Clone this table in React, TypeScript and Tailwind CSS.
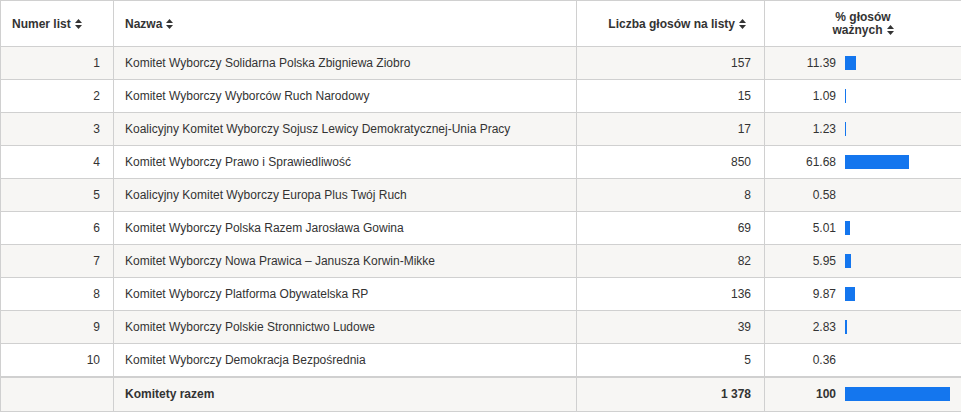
const rows = [
  { n: 1, name: "Komitet Wyborczy Solidarna Polska Zbigniewa Ziobro", votes: "157", pct: 11.39 },
  { n: 2, name: "Komitet Wyborczy Wyborców Ruch Narodowy", votes: "15", pct: 1.09 },
  { n: 3, name: "Koalicyjny Komitet Wyborczy Sojusz Lewicy Demokratycznej-Unia Pracy", votes: "17", pct: 1.23 },
  { n: 4, name: "Komitet Wyborczy Prawo i Sprawiedliwość", votes: "850", pct: 61.68 },
  { n: 5, name: "Koalicyjny Komitet Wyborczy Europa Plus Twój Ruch", votes: "8", pct: 0.58 },
  { n: 6, name: "Komitet Wyborczy Polska Razem Jarosława Gowina", votes: "69", pct: 5.01 },
  { n: 7, name: "Komitet Wyborczy Nowa Prawica – Janusza Korwin-Mikke", votes: "82", pct: 5.95 },
  { n: 8, name: "Komitet Wyborczy Platforma Obywatelska RP", votes: "136", pct: 9.87 },
  { n: 9, name: "Komitet Wyborczy Polskie Stronnictwo Ludowe", votes: "39", pct: 2.83 },
  { n: 10, name: "Komitet Wyborczy Demokracja Bezpośrednia", votes: "5", pct: 0.36 },
];

function SortIcon() {
  return (
    <svg width="7" height="10" viewBox="0 0 7 10" className="ml-[4px] inline-block align-[-1px]" aria-hidden>
      <path d="M3.5 0 L7 4 H0 Z" fill="#333" />
      <path d="M3.5 10 L7 6 H0 Z" fill="#333" />
    </svg>
  );
}

function PctCell({ pct, bold }: { pct: number; bold?: boolean }) {
  const w = Math.floor(pct * 1.05);
  return (
    <div className="flex items-center">
      <span className={"w-[71px] text-right " + (bold ? "font-bold" : "")}>{bold ? "100" : pct.toFixed(2)}</span>
      {w > 0 ? <span className="ml-[9px] h-[14px] bg-[#1476ee]" style={{ width: w }} /> : null}
    </div>
  );
}

export default function App() {
  return (
    <div className="bg-white font-['Liberation_Sans',Arial,sans-serif] text-[12px] text-[#333]">
      <table className="w-[961px] table-fixed border-collapse border border-[#d0d0d0]">
        <colgroup>
          <col className="w-[113px]" />
          <col className="w-[463px]" />
          <col className="w-[188px]" />
          <col className="w-[197px]" />
        </colgroup>
        <thead>
          <tr className="h-[46px] bg-white">
            <th className="border border-[#d0d0d0] pl-[11px] text-left font-bold">
              Numer list<SortIcon />
            </th>
            <th className="border border-[#d0d0d0] pl-[11px] text-left font-bold">
              Nazwa<SortIcon />
            </th>
            <th className="border border-[#d0d0d0] pr-[18px] text-right font-bold">
              Liczba głosów na listy<SortIcon />
            </th>
            <th className="border border-[#d0d0d0] text-center font-bold leading-[13px]">
              % głosów
              <br />
              ważnych<SortIcon />
            </th>
          </tr>
        </thead>
        <tbody>
          {rows.map((r, i) => (
            <tr key={r.n} className={"h-[33px] " + (i % 2 === 0 ? "bg-[#f7f6f4]" : "bg-white")}>
              <td className="border border-[#d0d0d0] pr-[13px] text-right">{r.n}</td>
              <td className="border border-[#d0d0d0] pl-[11px]">{r.name}</td>
              <td className="border border-[#d0d0d0] pr-[13px] text-right">{r.votes}</td>
              <td className="border border-[#d0d0d0] p-0">
                <PctCell pct={r.pct} />
              </td>
            </tr>
          ))}
        </tbody>
        <tfoot>
          <tr className="h-[35px] border-t-2 border-[#d0d0d0] bg-[#f7f6f4] font-bold">
            <td className="border border-t-2 border-[#d0d0d0]" />
            <td className="border border-t-2 border-[#d0d0d0] pl-[11px]">Komitety razem</td>
            <td className="border border-t-2 border-[#d0d0d0] pr-[13px] text-right">1 378</td>
            <td className="border border-t-2 border-[#d0d0d0] p-0">
              <PctCell pct={100} bold />
            </td>
          </tr>
        </tfoot>
      </table>
    </div>
  );
}
